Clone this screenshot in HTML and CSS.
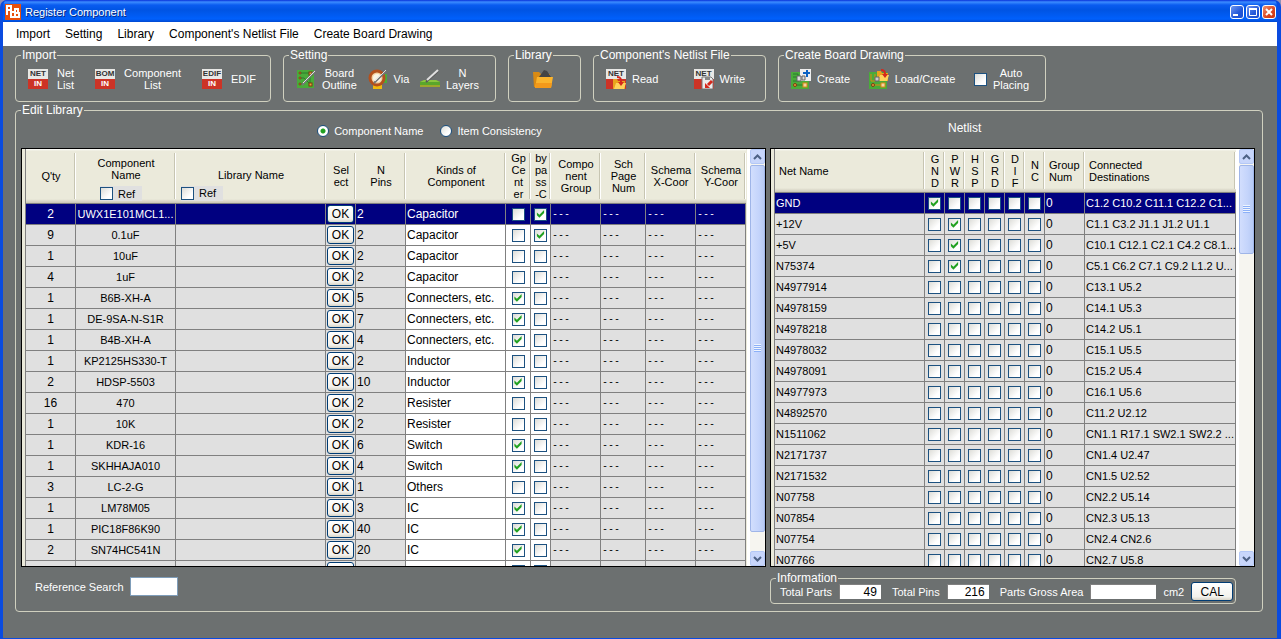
FILE: index.html
```html
<!DOCTYPE html>
<html lang="en">
<head>
    <meta charset="UTF-8">
    <title>Register Component</title>
    <link rel="stylesheet" href="styles.css">
</head>
<body>
<div class="window">
    <header class="titlebar">
        <svg class="app-icon" viewBox="0 0 16 16" aria-hidden="true">
            <rect width="16" height="16" fill="#e8500c"/>
            <path d="M2 11V2h4v4H3M9 8H6v5h3M10 4v9h4V9h-3.500M10 5h3v4" fill="none" stroke="#fff" stroke-width="2"/>
        </svg>
        <h1>Register Component</h1>
        <div class="window-buttons">
            <button aria-label="Minimize"><svg viewBox="0 0 12 12"><path d="M2 9h5" stroke="#fff" stroke-width="2"/></svg></button>
            <button aria-label="Maximize"><svg viewBox="0 0 12 12"><path d="M2.500 3h7v6.500h-7z" fill="none" stroke="#fff"/><path d="M2 3h8" stroke="#fff" stroke-width="2"/></svg></button>
            <button class="close" aria-label="Close"><svg viewBox="0 0 12 12"><path d="M3 3l6 6M9 3l-6 6" stroke="#fff" stroke-width="2"/></svg></button>
        </div>
    </header>

    <nav class="menubar">
        <a href="#">Import</a>
        <a href="#">Setting</a>
        <a href="#">Library</a>
        <a href="#">Component's Netlist File</a>
        <a href="#">Create Board Drawing</a>
    </nav>

    <main>
        <div class="toolbar">
            <fieldset class="group">
                <legend>Import</legend>
                <div class="tools import">
                    <button class="tool">
                        <span class="in-icon"><b>NET</b><b>IN</b></span>
                        <span>Net<br>List</span>
                    </button>
                    <button class="tool">
                        <span class="in-icon"><b>BOM</b><b>IN</b></span>
                        <span>Component<br>List</span>
                    </button>
                    <button class="tool">
                        <span class="in-icon"><b>EDIF</b><b>IN</b></span>
                        <span>EDIF</span>
                    </button>
                </div>
            </fieldset>

            <fieldset class="group">
                <legend>Setting</legend>
                <div class="tools">
                    <button class="tool">
                        <svg class="icon" viewBox="0 0 20 20" aria-hidden="true">
                            <rect x="1" y="1" width="17" height="18" fill="#49ab3a"/>
                            <path d="M4 4h10M4 9h4l6 6M4 15h3M14 4v11" fill="none" stroke="#2b7a2c"/>
                            <g fill="#e9a13b" stroke="#7d3b12"><circle cx="4" cy="4" r="1"/><circle cx="4" cy="9" r="1"/><circle cx="4" cy="15" r="1"/><rect x="13" y="3" width="3" height="3"/><rect x="13" y="14" width="3" height="3"/></g>
                            <path d="M6 16L19 2" stroke="#777" stroke-width="2"/><path d="M7 14L19 2" stroke="#e0e0e0"/>
                        </svg>
                        <span>Board<br>Outline</span>
                    </button>
                    <button class="tool">
                        <svg class="icon" viewBox="0 0 20 20" aria-hidden="true">
                            <path d="M13 5h6v9h-6z" fill="#49ab3a"/>
                            <path d="M5 16h9v4H5z" fill="#f2b90c"/>
                            <circle cx="9" cy="9" r="7" fill="#f3d2a4" stroke="#b4501c" stroke-width="3"/>
                            <circle cx="9" cy="9" r="4" fill="#faf3e4"/>
                            <path d="M6 14L18 2" stroke="#777" stroke-width="2"/><path d="M7 12L18 1" stroke="#e0e0e0"/>
                        </svg>
                        <span>Via</span>
                    </button>
                    <button class="tool">
                        <svg class="icon" viewBox="0 0 20 20" aria-hidden="true">
                            <path d="M0 13l4-2h12l4 2v5H0z" fill="#5aa62b"/>
                            <path d="M0 13l4-2h12l4 2z" fill="#8cc63f"/>
                            <path d="M0 17h20" stroke="#e0a92e"/>
                            <path d="M6 13L18 2" stroke="#555" stroke-width="2"/><path d="M7 11L18 1" stroke="#e0e0e0" stroke-width="2"/>
                        </svg>
                        <span>N<br>Layers</span>
                    </button>
                </div>
            </fieldset>

            <fieldset class="group">
                <legend>Library</legend>
                <div class="tools single">
                    <button class="tool" aria-label="Open library">
                        <svg class="icon" viewBox="0 0 20 20" aria-hidden="true">
                            <path d="M0 3h6l2 2h9v13H1z" fill="#d98a13"/>
                            <path d="M6 8l5-7 3 1 4 6z" fill="#444"/>
                            <path d="M2 19L4 8h16l-2 11z" fill="#fbb42c"/>
                            <path d="M2 19l1-5h16l-1 5z" fill="#f4991a"/>
                        </svg>
                    </button>
                </div>
            </fieldset>

            <fieldset class="group">
                <legend>Component's Netlist File</legend>
                <div class="tools files">
                    <button class="tool">
                        <span class="in-icon"><b>NET</b><b></b>
                            <svg class="overlay" viewBox="0 0 13 13" aria-hidden="true">
                                <path d="M0 3h4l1 2h7v8H0z" fill="#e9a31c"/><path d="M1 13l2-6h10l-2 6z" fill="#ffd25a"/>
                                <path d="M4 1c4 0 4 2 4 5" fill="none" stroke="#d5281c" stroke-width="2"/><path d="M5 6h6l-3 4z" fill="#d5281c"/>
                            </svg>
                        </span>
                        <span>Read</span>
                    </button>
                    <button class="tool">
                        <span class="in-icon"><b>NET</b><b></b>
                            <svg class="overlay" viewBox="0 0 13 13" aria-hidden="true">
                                <path d="M1 1h9l2 2v10H1z" fill="#ececec" stroke="#777"/><path d="M4 1h5v3H4z" fill="#888"/>
                                <path d="M11 5L7 9" stroke="#d5281c" stroke-width="3"/><path d="M4 12V7l5 5z" fill="#d5281c"/>
                            </svg>
                        </span>
                        <span>Write</span>
                    </button>
                </div>
            </fieldset>

            <fieldset class="group">
                <legend>Create Board Drawing</legend>
                <div class="tools">
                    <button class="tool">
                        <svg class="icon" viewBox="0 0 20 20" aria-hidden="true">
                            <path d="M0 3h18v17H0z" fill="#49ab3a"/>
                            <path d="M2 5h5v3H2M2 12h6M4 16h9" fill="none" stroke="#2b7a2c"/>
                            <circle cx="4" cy="16" r="1.500" fill="#e9a13b" stroke="#7d3b12"/><rect x="12" y="14" width="4" height="4" fill="#f3d2a4" stroke="#d98a13"/>
                            <path d="M9 0h11v12H9z" fill="#eee"/><path d="M6 7h4v5H6zM11 7h3v4h-3z" fill="#ddd" stroke="#666"/>
                            <path d="M16 1v7M12 4h7" stroke="#0a62c4" stroke-width="2"/>
                        </svg>
                        <span>Create</span>
                    </button>
                    <button class="tool">
                        <svg class="icon" viewBox="0 0 20 20" aria-hidden="true">
                            <path d="M0 3h18v17H0z" fill="#49ab3a"/>
                            <path d="M2 5v7h4V5M4 16h9" fill="none" stroke="#d98a13"/>
                            <circle cx="4" cy="16" r="1.500" fill="#e9a13b" stroke="#7d3b12"/><rect x="12" y="14" width="4" height="4" fill="#f3d2a4" stroke="#d98a13"/>
                            <path d="M8 2h4l1 2h6v8H8z" fill="#e9a31c"/><path d="M9 12l2-6h9l-2 6z" fill="#ffd25a"/>
                            <path d="M6 8h4v4H6z" fill="#ccc" stroke="#666"/>
                            <path d="M12 1c3 0 4 1 4 4" fill="none" stroke="#d5281c" stroke-width="2"/><path d="M13 5h6l-3 4z" fill="#d5281c"/>
                        </svg>
                        <span>Load/Create</span>
                    </button>
                    <label class="tool"><input type="checkbox"><span>Auto<br>Placing</span></label>
                </div>
            </fieldset>
        </div>

        <fieldset class="group edit-library">
            <legend>Edit Library</legend>
            <div class="edit-grid">
                <div class="mode-row">
                    <label><input type="radio" name="mode" checked>Component Name</label>
                    <label><input type="radio" name="mode">Item Consistency</label>
                </div>
                <h2>Netlist</h2>

                <div class="pane">
                    <div class="table-clip left">
                        <table class="components">
                            <colgroup>
                                <col class="w50"><col class="w100"><col><col class="w30"><col class="w50"><col class="w100"><col class="w25"><col class="w20"><col class="w50"><col class="w45"><col class="w50"><col class="w50">
                            </colgroup>
                            <thead>
                            <tr>
                                <th>Q'ty</th>
                                <th class="name-head">Component<br>Name<label class="ref"><input type="checkbox">Ref</label></th>
                                <th><div class="lib-head"><span>Library Name</span><label class="ref"><input type="checkbox">Ref</label></div></th>
                                <th>Sel<br>ect</th>
                                <th>N<br>Pins</th>
                                <th>Kinds of<br>Component</th>
                                <th>Gp<br>Ce<br>nt<br>er</th>
                                <th>by<br>pa<br>ss<br>-C</th>
                                <th>Compo<br>nent<br>Group</th>
                                <th>Sch<br>Page<br>Num</th>
                                <th>Schema<br>X-Coor</th>
                                <th>Schema<br>Y-Coor</th>
                            </tr>
                            </thead>
                            <tbody id="componentRows"></tbody>
                        </table>
                    </div>
                    <div class="scrollbar">
                        <button aria-label="Scroll up"><svg viewBox="0 0 9 6"><path d="M1 5l3.500-3.500L8 5" fill="none" stroke="#4d6185" stroke-width="2"/></svg></button>
                        <div class="track"><div class="thumb long"></div></div>
                        <button aria-label="Scroll down"><svg viewBox="0 0 9 6"><path d="M1 1l3.500 3.500L8 1" fill="none" stroke="#4d6185" stroke-width="2"/></svg></button>
                    </div>
                </div>

                <div class="pane">
                    <div class="table-clip">
                        <table class="nets">
                            <colgroup>
                                <col class="w150"><col class="w20"><col class="w20"><col class="w20"><col class="w20"><col class="w20"><col class="w20"><col class="w40"><col>
                            </colgroup>
                            <thead>
                            <tr>
                                <th>Net Name</th>
                                <th>G<br>N<br>D</th>
                                <th>P<br>W<br>R</th>
                                <th>H<br>S<br>P</th>
                                <th>G<br>R<br>D</th>
                                <th>D<br>I<br>F</th>
                                <th>N<br>C</th>
                                <th>Group<br>Num</th>
                                <th>Connected<br>Destinations</th>
                            </tr>
                            </thead>
                            <tbody id="netRows"></tbody>
                        </table>
                    </div>
                    <div class="scrollbar">
                        <button aria-label="Scroll up"><svg viewBox="0 0 9 6"><path d="M1 5l3.500-3.500L8 5" fill="none" stroke="#4d6185" stroke-width="2"/></svg></button>
                        <div class="track"><div class="thumb short"></div></div>
                        <button aria-label="Scroll down"><svg viewBox="0 0 9 6"><path d="M1 1l3.500 3.500L8 1" fill="none" stroke="#4d6185" stroke-width="2"/></svg></button>
                    </div>
                </div>

                <div class="search">
                    <label for="refSearch">Reference Search</label>
                    <input type="text" id="refSearch">
                </div>

                <fieldset class="group information">
                    <legend>Information</legend>
                    <div class="info-row">
                        <label for="totalParts">Total Parts</label>
                        <input type="text" id="totalParts" value="49">
                        <label for="totalPins">Total Pins</label>
                        <input type="text" id="totalPins" value="216">
                        <label for="grossArea">Parts Gross Area</label>
                        <input type="text" id="grossArea" class="wide">
                        <span>cm2</span>
                        <button class="xp-button">CAL</button>
                    </div>
                </fieldset>
            </div>
        </fieldset>
    </main>
</div>
<script src="app.js"></script>
</body>
</html>
```

FILE: styles.css
```css
* {
    box-sizing: border-box;
}

body {
    margin: 0;
    background-color: #8d90b8;
    font-family: "Liberation Sans", Arial, sans-serif;
    font-size: 12px;
    line-height: 12px;
}

button,
input {
    font: inherit;
    margin: 0;
}

.window {
    display: flex;
    flex-direction: column;
    height: 100vh;
    border: solid #0a4be0;
    border-width: 0 4px 1px 3px;
    border-radius: 7px 7px 0 0;
    background-color: #0a4be0;
    overflow: hidden;
}

/* title bar */
.titlebar {
    display: flex;
    align-items: center;
    height: 22px;
    flex-shrink: 0;
    padding: 2px 1px 0 2px;
    background: linear-gradient(#0831d9 0, #3c8cff 2px, #0a5cf0 5px, #0054e3 10px, #0060fc 19px, #0048d0 22px);
}

.titlebar h1 {
    flex: 1;
    margin: 0 0 0 4px;
    font-size: 11px;
    font-weight: normal;
    color: #fff;
    text-shadow: 1px 1px #0a2a80;
}

.app-icon {
    width: 16px;
    height: 16px;
}

.window-buttons {
    display: flex;
    gap: 2px;
}

.window-buttons button {
    width: 14px;
    height: 14px;
    padding: 0;
    border: 1px solid #fff;
    border-radius: 3px;
    background: linear-gradient(135deg, #6f97f2, #2257d8 60%, #1c4fd0);
}

.window-buttons .close {
    background: linear-gradient(135deg, #f0906f, #da4420 60%, #c9350f);
}

.window-buttons svg {
    display: block;
    width: 12px;
    height: 12px;
}

.menubar {
    display: flex;
    align-items: center;
    gap: 15px;
    height: 24px;
    flex-shrink: 0;
    padding-left: 13px;
    background-color: #fff;
}

.menubar a {
    color: #000;
    text-decoration: none;
}

main {
    flex: 1;
    min-height: 0;
    display: flex;
    flex-direction: column;
    gap: 2px;
    padding: 3px 14px 26px 12px;
    background-color: #6c7070;
    color: #fff;
}

/* group boxes */
.group {
    min-width: 0;
    margin: 0;
    padding: 0;
    border: 1px solid #d0d0bf;
    border-radius: 4px;
}

.group legend {
    margin-left: 5px;
    padding: 0 1px;
    line-height: 12px;
}

.toolbar {
    display: grid;
    grid-template-columns: 256px 213px 73px 173px 268px;
    gap: 12px;
    height: 53px;
    flex-shrink: 0;
}

.tools {
    display: flex;
    justify-content: space-between;
    align-items: center;
    height: 36px;
    padding: 0 16px 0 12px;
}

.tools.single {
    justify-content: center;
}

.tools.files {
    padding-right: 20px;
}

.tool {
    display: flex;
    align-items: center;
    gap: 6px;
    padding: 0;
    border: none;
    background: none;
    color: #fff;
    font-size: 11px;
    line-height: 12px;
    text-align: center;
}

.tools.import {
    padding-right: 14px;
}

.import .tool {
    gap: 9px;
}

.icon {
    width: 20px;
    height: 20px;
}

.in-icon {
    position: relative;
    display: grid;
    grid-template-rows: 10px 10px;
    width: 20px;
    background-color: #cc3326;
    color: #fff;
    font-size: 8px;
    line-height: 10px;
    overflow: hidden;
}

.in-icon b:first-child {
    background-color: #e8e8e6;
    color: #333;
}

.in-icon b {
    display: flex;
    justify-content: center;
}

.overlay {
    position: absolute;
    right: 0;
    bottom: 0;
    width: 13px;
    height: 13px;
}

/* tick boxes and radios */
input[type="checkbox"] {
    appearance: none;
    display: inline-grid;
    place-content: center;
    width: 13px;
    height: 13px;
    flex-shrink: 0;
    border: 1px solid #1c5180;
    background: linear-gradient(135deg, #dcdcd7, #fff 70%);
}

input[type="checkbox"]:checked::before {
    content: "";
    width: 9px;
    height: 9px;
    background-color: #21a121;
    clip-path: polygon(10% 32%, 38% 57%, 90% 6%, 90% 40%, 38% 92%, 10% 65%);
}

input[type="radio"] {
    appearance: none;
    width: 12px;
    height: 12px;
    border: 1px solid #1c5180;
    border-radius: 50%;
    background: linear-gradient(135deg, #dcdcd7, #fff 70%);
}

input[type="radio"]:checked {
    background: radial-gradient(circle, #21a121 0, #21a121 2px, #fff 3px);
}

.edit-library {
    flex: 1;
    min-height: 0;
}

.edit-grid {
    display: grid;
    grid-template-columns: 745fr 485fr;
    grid-template-rows: 32px 1fr 44px;
    column-gap: 4px;
    height: 100%;
    padding: 0 7px 0 5px;
}

.edit-grid h2 {
    margin: 0;
    padding: 6px 0 0 178px;
    font-size: 12px;
    font-weight: normal;
}

.mode-row {
    display: flex;
    justify-content: center;
    align-items: center;
    gap: 17px;
    padding: 0 0 2px 72px;
    font-size: 11px;
}

.mode-row label {
    display: flex;
    align-items: center;
    gap: 5px;
}

/* table panes */
.pane {
    display: flex;
    gap: 3px;
    min-width: 0;
    min-height: 0;
    border: 1px solid #000;
    background-color: #fff;
    color: #000;
    overflow: hidden;
}

.table-clip {
    flex: 1;
    min-width: 0;
    overflow: hidden;
    padding-left: 3px;
    background-color: #ebeadb;
}

.table-clip.left {
    padding-right: 1px;
}

table {
    width: 100%;
    table-layout: fixed;
    border-collapse: separate;
    border-spacing: 0;
    border-left: 1px solid #808080;
}

.w20 { width: 20px; }
.w25 { width: 25px; }
.w30 { width: 30px; }
.w40 { width: 40px; }
.w45 { width: 45px; }
.w50 { width: 50px; }
.w100 { width: 100px; }
.w150 { width: 150px; }

th {
    padding: 0;
    border-bottom: 1px solid #808080;
    font-size: 11px;
    font-weight: normal;
    background:
        linear-gradient(#c7c5b2, #c7c5b2) right 1px center / 1px 86% no-repeat,
        linear-gradient(#fff, #fff) right center / 1px 86% no-repeat,
        linear-gradient(#fff 0, #ebeadb 2px, #ebeadb calc(100% - 4px), #cbc7b8 100%);
}

.components th {
    height: 55px;
}

.components .name-head {
    padding-top: 6px;
}

.nets th {
    height: 44px;
}

.nets th:first-child,
.nets th:nth-last-child(-n+2) {
    padding-left: 4px;
    text-align: left;
}

.ref {
    display: flex;
    align-items: center;
    gap: 5px;
    width: 42px;
    height: 15px;
    margin: 5px auto 0 24px;
    background-color: #e0e0e0;
}

.lib-head {
    display: grid;
    grid-template-rows: 1fr 15px;
    height: 53px;
    padding: 15px 0 2px;
    align-items: center;
}

.lib-head .ref {
    margin: 0 0 0 5px;
}

td {
    height: 21px;
    padding: 0 1px;
    border-right: 1px solid #808080;
    border-bottom: 1px solid #808080;
    background-color: #e0e0e0;
    font-size: 12px;
    line-height: 14px;
    white-space: nowrap;
}

td.part,
td.net,
td.dest {
    font-size: 11px;
}

td.part {
    padding: 0;
}

td.center {
    text-align: center;
}

td.dash {
    font-family: "DejaVu Sans Mono", monospace;
    font-size: 10px;
}

td.editable {
    background-color: #fff;
}

td.check {
    padding: 0;
    text-align: center;
}

td.check input {
    display: grid;
    margin: 0 auto;
}

tr.selected td {
    background-color: #000080;
    color: #fff;
}

.xp-button {
    border: 1px solid #003c74;
    border-radius: 3px;
    background: linear-gradient(#fff, #f3f2ed 80%, #d9d5c8);
    color: #000;
}

td .xp-button {
    display: block;
    width: 100%;
    height: 18px;
    padding: 0;
    line-height: 16px;
}

/* scroll bars */
.scrollbar {
    display: flex;
    flex-direction: column;
    width: 15px;
    background-color: #f6f5f0;
}

.scrollbar button {
    display: grid;
    place-content: center;
    height: 15px;
    padding: 0;
    border: 1px solid #b4c8f6;
    border-radius: 2px;
    background-color: #c8d6fb;
}

.scrollbar svg {
    width: 9px;
    height: 6px;
}

.track {
    flex: 1;
    padding-top: 1px;
}

.thumb {
    border: 1px solid #9fb5e8;
    border-radius: 2px;
    background:
        repeating-linear-gradient(#eef4fe 0 1px, #8cb0f8 1px 2px) center / 7px 8px no-repeat,
        linear-gradient(90deg, #d2defd, #c4d4fb 60%, #b7caf5);
}

.thumb.long {
    height: 95%;
}

.thumb.short {
    height: 23%;
}

/* row under the tables */
.search {
    display: flex;
    align-items: center;
    gap: 6px;
    padding: 0 0 5px 14px;
    font-size: 11px;
}

.search input {
    width: 48px;
    height: 19px;
    border: 1px solid #7f9db9;
}

.information {
    width: 466px;
    height: 32px;
    margin-top: 5px;
}

.info-row {
    display: flex;
    align-items: center;
    gap: 7px;
    height: 19px;
    margin-top: -2px;
    padding: 0 5px 0 9px;
    font-size: 11px;
    white-space: nowrap;
}

.info-row input {
    width: 42px;
    height: 15px;
    margin-right: 4px;
    padding: 0 4px;
    border: solid #808080;
    border-width: 1px 0 0 1px;
    font-size: 12px;
    text-align: right;
}

.info-row .wide {
    width: 66px;
    margin-right: 0;
}

.info-row .xp-button {
    width: 42px;
    height: 19px;
    flex-shrink: 0;
    margin-left: auto;
    padding: 0;
    font-size: 12px;
}
```

FILE: app.js
```javascript
// qty, component name, pins, kind, Gp center, bypass-C
const components = [
    [2, 'UWX1E101MCL1...', 2, 'Capacitor', 0, 1],
    [9, '0.1uF', 2, 'Capacitor', 0, 1],
    [1, '10uF', 2, 'Capacitor', 0, 0],
    [4, '1uF', 2, 'Capacitor', 0, 0],
    [1, 'B6B-XH-A', 5, 'Connecters, etc.', 1, 0],
    [1, 'DE-9SA-N-S1R', 7, 'Connecters, etc.', 1, 0],
    [1, 'B4B-XH-A', 4, 'Connecters, etc.', 1, 0],
    [1, 'KP2125HS330-T', 2, 'Inductor', 0, 0],
    [2, 'HDSP-5503', 10, 'Inductor', 1, 0],
    [16, '470', 2, 'Resister', 0, 0],
    [1, '10K', 2, 'Resister', 0, 0],
    [1, 'KDR-16', 6, 'Switch', 1, 0],
    [1, 'SKHHAJA010', 4, 'Switch', 1, 0],
    [3, 'LC-2-G', 1, 'Others', 0, 0],
    [1, 'LM78M05', 3, 'IC', 1, 0],
    [1, 'PIC18F86K90', 40, 'IC', 1, 0],
    [2, 'SN74HC541N', 20, 'IC', 1, 0],
    null
];

// net name, index of the ticked column, destinations
const nets = [
    ['GND', 0, 'C1.2 C10.2 C11.1 C12.2 C1...'],
    ['+12V', 1, 'C1.1 C3.2 J1.1 J1.2 U1.1'],
    ['+5V', 1, 'C10.1 C12.1 C2.1 C4.2 C8.1...'],
    ['N75374', 1, 'C5.1 C6.2 C7.1 C9.2 L1.2 U...'],
    ['N4977914', -1, 'C13.1 U5.2'],
    ['N4978159', -1, 'C14.1 U5.3'],
    ['N4978218', -1, 'C14.2 U5.1'],
    ['N4978032', -1, 'C15.1 U5.5'],
    ['N4978091', -1, 'C15.2 U5.4'],
    ['N4977973', -1, 'C16.1 U5.6'],
    ['N4892570', -1, 'C11.2 U2.12'],
    ['N1511062', -1, 'CN1.1 R17.1 SW2.1 SW2.2 ...'],
    ['N2171737', -1, 'CN1.4 U2.47'],
    ['N2171532', -1, 'CN1.5 U2.52'],
    ['N07758', -1, 'CN2.2 U5.14'],
    ['N07854', -1, 'CN2.3 U5.13'],
    ['N07754', -1, 'CN2.4 CN2.6'],
    ['N07766', -1, 'CN2.7 U5.8']
];

const netFlags = ['GND', 'PWR', 'HSP', 'GRD', 'DIF', 'NC'];

function check(on, label, cls) {
    return `<td class="check ${cls}"><input type="checkbox" aria-label="${label}"${on ? ' checked' : ''}></td>`;
}

function componentRow(c, i) {
    const [qty, name, pins, kind, gp, bypass] = c || ['', '', '', '', 0, 0];
    return `<tr${i === 0 ? ' class="selected"' : ''}>
        <td class="center">${qty}</td>
        <td class="center part">${name}</td>
        <td></td>
        <td><button class="xp-button" aria-label="OK">${c ? 'OK' : ''}</button></td>
        <td>${pins}</td>
        <td class="editable">${kind}</td>
        ${check(gp, 'Gp center', 'editable')}
        ${check(bypass, 'Bypass-C', 'editable')}
        ${`<td class="dash">${c ? '---' : ''}</td>`.repeat(4)}
    </tr>`;
}

document.getElementById('componentRows').innerHTML = components.map(componentRow).join('');

document.getElementById('netRows').innerHTML = nets.map((n, i) => `<tr${i === 0 ? ' class="selected"' : ''}>
    <td class="net">${n[0]}</td>
    ${netFlags.map((flag, f) => check(f === n[1], flag, '')).join('')}
    <td>0</td>
    <td class="dest">${n[2]}</td>
</tr>`).join('');
```
